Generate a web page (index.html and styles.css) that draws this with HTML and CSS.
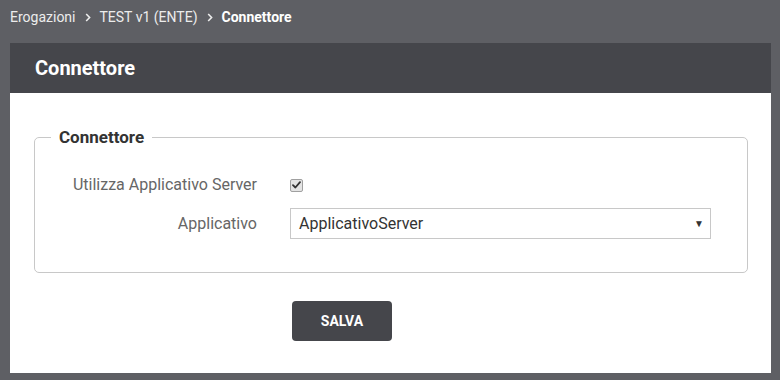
FILE: index.html
```html
<!DOCTYPE html>
<html lang="it">
<head>
<meta charset="utf-8">
<title>Connettore</title>
<link rel="stylesheet" href="styles.css">
</head>
<body>
<nav class="breadcrumb">
  <span class="crumb">Erogazioni</span>
  <svg class="sep" width="6" height="9" viewBox="0 0 6 9"><path d="M1.2 1 L4.6 4.5 L1.2 8" fill="none" stroke="#ececec" stroke-width="1.6"/></svg>
  <span class="crumb">TEST v1 (ENTE)</span>
  <svg class="sep" width="6" height="9" viewBox="0 0 6 9"><path d="M1.2 1 L4.6 4.5 L1.2 8" fill="none" stroke="#ececec" stroke-width="1.6"/></svg>
  <span class="crumb current">Connettore</span>
</nav>
<section class="panel">
  <header class="panel-header">Connettore</header>
  <div class="panel-body">
    <fieldset class="group">
      <legend class="group-title">Connettore</legend>
      <div class="form-grid">
        <label class="form-label">Utilizza Applicativo Server</label>
        <div class="form-control">
          <span class="checkbox">
            <svg width="9" height="8" viewBox="0 0 9 8"><path d="M1 4.2 L3.4 6.5 L8 1.2" fill="none" stroke="#333" stroke-width="1.8" stroke-linecap="round" stroke-linejoin="round"/></svg>
          </span>
        </div>
        <label class="form-label">Applicativo</label>
        <div class="form-control">
          <div class="select">
            <span class="select-value">ApplicativoServer</span>
            <span class="select-arrow">▼</span>
          </div>
        </div>
      </div>
    </fieldset>
    <div class="actions">
      <button class="btn" type="button">SALVA</button>
    </div>
  </div>
</section>
</body>
</html>
```
FILE: styles.css
```css
html, body {
  margin: 0;
  padding: 0;
}
body {
  background: #5e5f64;
  font-family: Roboto, "Liberation Sans", Arial, sans-serif;
  width: 780px;
  height: 380px;
  overflow: hidden;
}
.breadcrumb {
  height: 43px;
  box-sizing: border-box;
  padding: 8px 0 0 10px;
  font-size: 14px;
  line-height: 18px;
  color: #ececec;
  display: flex;
  align-items: flex-start;
  gap: 9px;
}
.sep {
  margin-top: 5px;
}
.crumb.current {
  font-weight: 700;
  color: #fff;
}
.panel {
  margin: 0 9px 0 10px;
}
.panel-header {
  height: 50px;
  line-height: 50px;
  background: #45464b;
  color: #fff;
  font-size: 20px;
  font-weight: 700;
  padding-left: 25px;
}
.panel-body {
  background: #fff;
  height: 280px;
  box-sizing: border-box;
  padding: 34px 23px 0 24px;
}
.group {
  margin: 0;
  border: 1px solid #c8c8c8;
  border-radius: 5px;
  padding: 0 36px 33px 0;
  min-width: 0;
}
.group-title {
  margin-left: 16px;
  padding: 0 8px;
  font-size: 17px;
  line-height: 20px;
  font-weight: 700;
  color: #333;
}
.form-grid {
  display: grid;
  grid-template-columns: 222px 1fr;
  column-gap: 33px;
  row-gap: 12px;
  margin-top: 27px;
  align-items: center;
}
.form-label {
  text-align: right;
  font-size: 16px;
  color: #666;
  line-height: 22px;
}
.form-control {
  display: flex;
  align-items: center;
  min-height: 22px;
}
.checkbox {
  width: 11px;
  height: 11px;
  border: 1px solid #a0a0a0;
  border-radius: 2px;
  background: #e4e4e4;
  display: flex;
  align-items: center;
  justify-content: center;
}
.select {
  width: 421px;
  height: 31px;
  box-sizing: border-box;
  border: 1px solid #c8c8c8;
  display: flex;
  align-items: center;
  justify-content: space-between;
  padding: 0 6px 0 8px;
  font-size: 16px;
  color: #333;
}
.select-arrow {
  font-size: 10px;
  color: #333;
}
.actions {
  padding: 28px 0 0 258px;
}
.btn {
  width: 100px;
  height: 40px;
  border: none;
  border-radius: 4px;
  background: #45464b;
  color: #fff;
  font-family: Roboto, "Liberation Sans", Arial, sans-serif;
  font-weight: 700;
  font-size: 14px;
  cursor: pointer;
}
```
